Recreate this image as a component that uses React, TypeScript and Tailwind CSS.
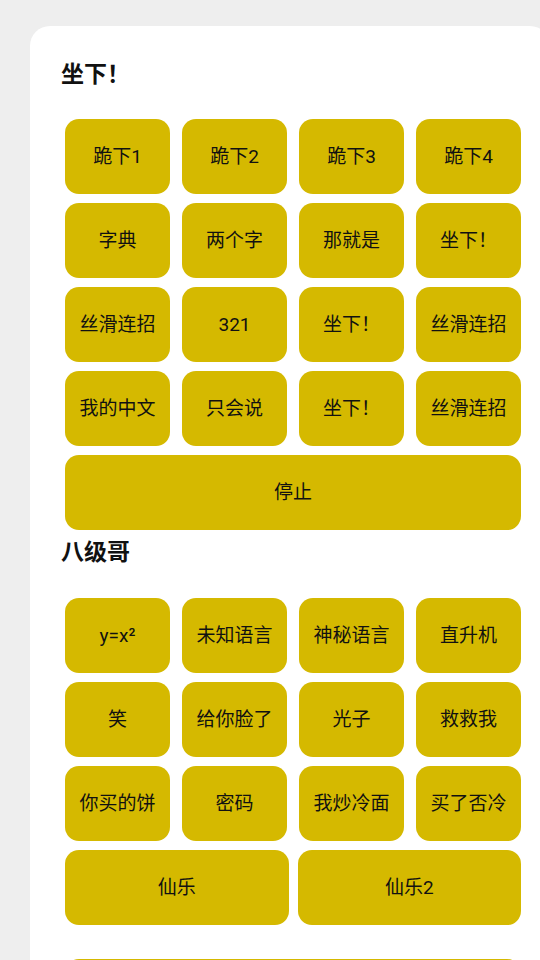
const sections: { title: string; rows: string[][] }[] = [
  {
    title: '坐下！',
    rows: [
      ['跪下1', '跪下2', '跪下3', '跪下4'],
      ['字典', '两个字', '那就是', '坐下！'],
      ['丝滑连招', '321', '坐下！', '丝滑连招'],
      ['我的中文', '只会说', '坐下！', '丝滑连招'],
      ['停止'],
    ],
  },
  {
    title: '八级哥',
    rows: [
      ['y=x²', '未知语言', '神秘语言', '直升机'],
      ['笑', '给你脸了', '光子', '救救我'],
      ['你买的饼', '密码', '我炒冷面', '买了否冷'],
      ['仙乐', '仙乐2'],
    ],
  },
]

function SoundButton({ label }: { label: string }) {
  return (
    <button className="flex h-[75px] flex-1 items-center justify-center rounded-[14px] bg-[#d5b900] pt-[2px] text-[19px] text-[#111111]">
      {label}
    </button>
  )
}

export default function App() {
  return (
    <div
      className="h-[960px] w-[540px] overflow-hidden bg-[#eeeeee] pt-[26px] pl-[30px]"
      style={{ fontFamily: 'Roboto, "Noto Sans CJK SC", sans-serif' }}
    >
      <div className="min-h-[1000px] w-[520px] rounded-[20px] bg-white pt-[34px] pl-[31px]">
        {sections.map((section, si) => (
          <section key={section.title} className={si === 0 ? '' : 'mt-[8px]'}>
            <h2 className="h-[30px] text-[23px] leading-[30px] font-bold text-[#111111]">{section.title}</h2>
            <div className={si === 0 ? 'mt-[29px] flex w-[460px] flex-col gap-[9px] pl-[4px]' : 'mt-[30px] flex w-[460px] flex-col gap-[9px] pl-[4px]'}>
              {section.rows.map((row, ri) => (
                <div key={ri} className={row.length === 4 ? 'flex gap-[12px]' : 'flex gap-[9px]'}>
                  {row.map((label, i) => (
                    <SoundButton key={i} label={label} />
                  ))}
                </div>
              ))}
            </div>
          </section>
        ))}
        <div className="mt-[34px] w-[460px] pl-[4px]">
          <div className="h-[75px] rounded-[14px] bg-[#d5b900]" />
        </div>
      </div>
    </div>
  )
}
